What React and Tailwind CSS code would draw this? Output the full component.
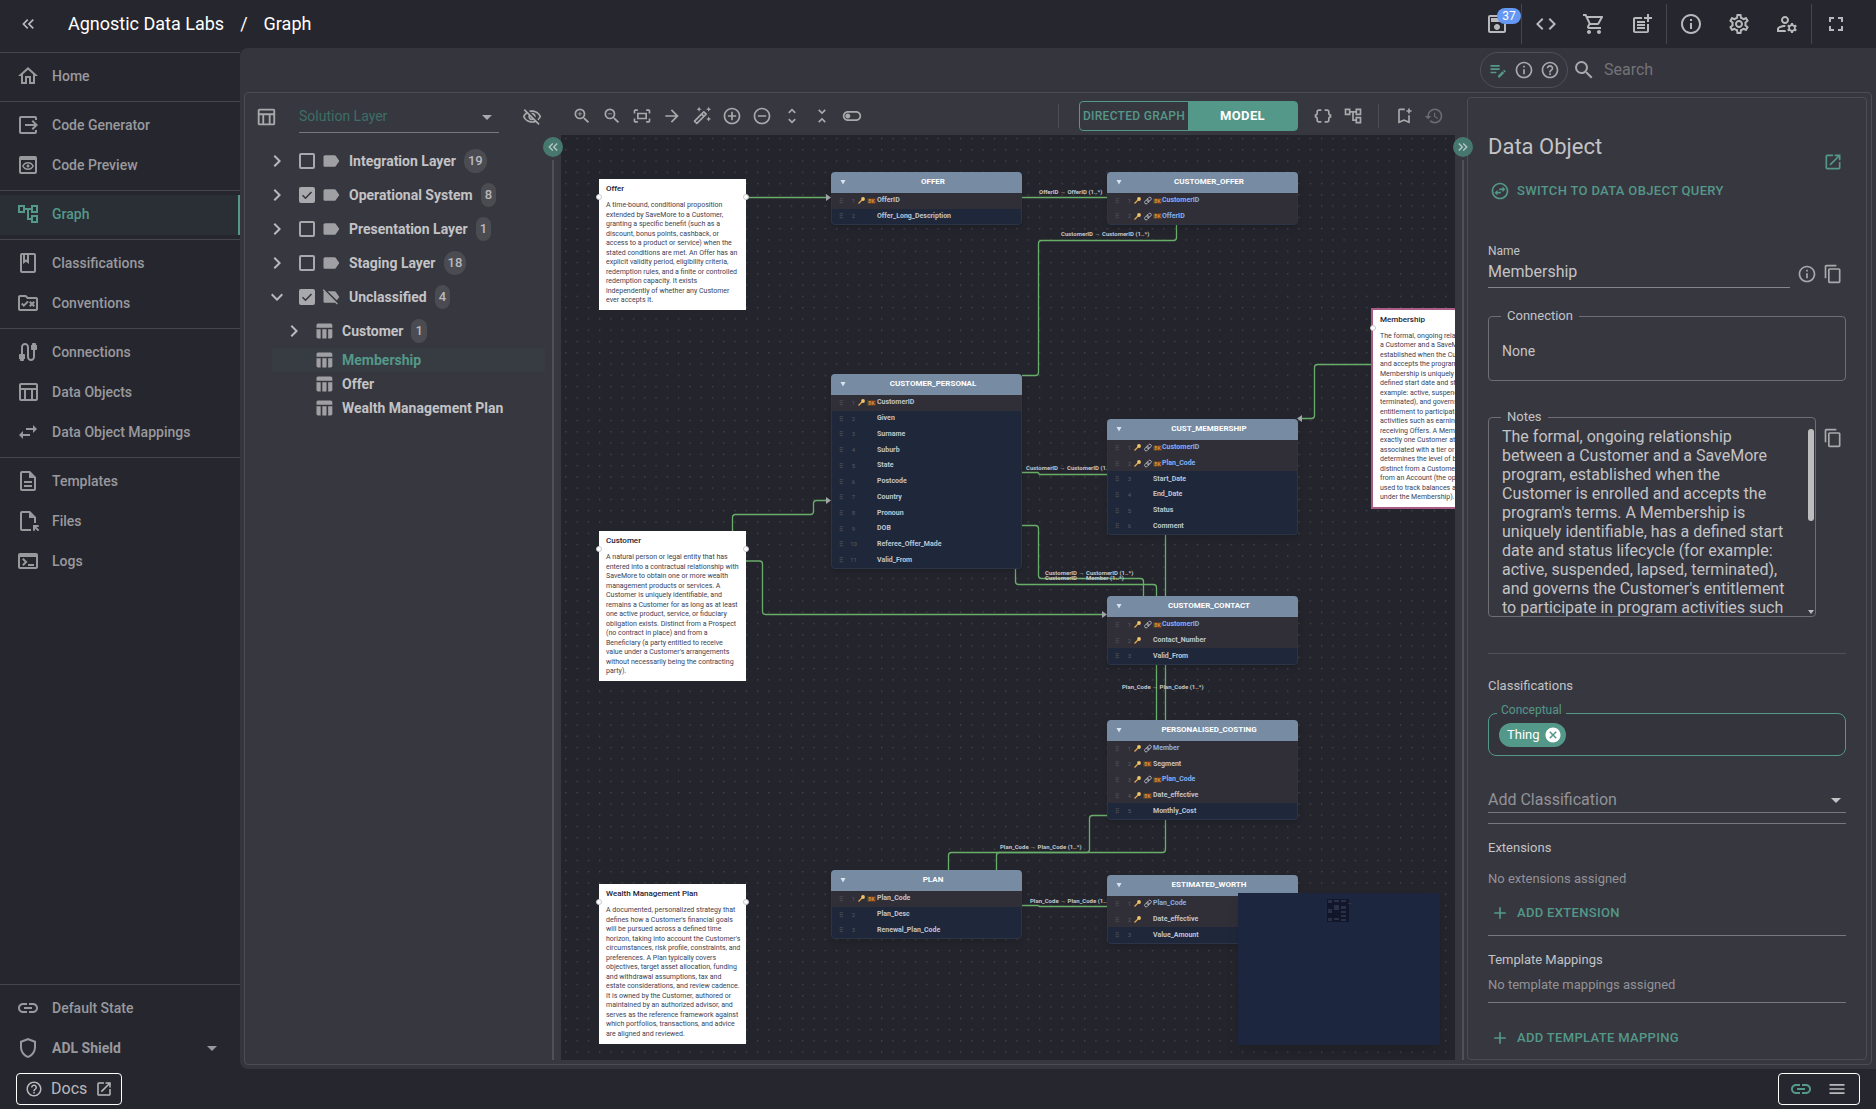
import React from "react"
import {
  MdAdd,
  MdAddCircleOutline,
  MdArrowDropDown,
  MdArrowForward,
  MdCancel,
  MdChevronRight,
  MdCode,
  MdContentCopy,
  MdDataObject,
  MdEditNote,
  MdExpandMore,
  MdFullscreen,
  MdHelpOutline,
  MdHistory,
  MdInfoOutline,
  MdKeyboardDoubleArrowLeft,
  MdKeyboardDoubleArrowRight,
  MdLabel,
  MdLabelOff,
  MdLink,
  MdMenu,
  MdOpenInNew,
  MdOutlineAccountTree,
  MdOutlineAutoFixHigh,
  MdOutlineBookmarkAdd,
  MdOutlineCable,
  MdOutlineClass,
  MdOutlineDescription,
  MdOutlineFileOpen,
  MdOutlineFitScreen,
  MdOutlineHome,
  MdOutlineManageAccounts,
  MdOutlineOutput,
  MdOutlinePreview,
  MdOutlineRuleFolder,
  MdOutlineSave,
  MdOutlineSettings,
  MdOutlineShield,
  MdOutlineShoppingCart,
  MdOutlineSwapHorizontalCircle,
  MdOutlineTableChart,
  MdOutlineTerminal,
  MdOutlineToggleOff,
  MdOutlineVisibilityOff,
  MdPostAdd,
  MdRemoveCircleOutline,
  MdSearch,
  MdSwapHoriz,
  MdTableChart,
  MdUnfoldLess,
  MdUnfoldMore,
  MdZoomIn,
  MdZoomOut,
} from "react-icons/md"

const navGroups = [
  [{ label: "Home", icon: MdOutlineHome }],
  [
    { label: "Code Generator", icon: MdOutlineOutput },
    { label: "Code Preview", icon: MdOutlinePreview },
  ],
  [{ label: "Graph", icon: MdOutlineAccountTree, active: true }],
  [
    { label: "Classifications", icon: MdOutlineClass },
    { label: "Conventions", icon: MdOutlineRuleFolder },
  ],
  [
    { label: "Connections", icon: MdOutlineCable },
    { label: "Data Objects", icon: MdOutlineTableChart },
    { label: "Data Object Mappings", icon: MdSwapHoriz },
  ],
  [
    { label: "Templates", icon: MdOutlineDescription },
    { label: "Files", icon: MdOutlineFileOpen },
    { label: "Logs", icon: MdOutlineTerminal },
  ],
]

const layers = [
  { label: "Integration Layer", count: 19 },
  { label: "Operational System", count: 8, checked: true },
  { label: "Presentation Layer", count: 1 },
  { label: "Staging Layer", count: 18 },
  { label: "Unclassified", count: 4, checked: true, open: true },
]

const notes = [
  {
    title: "Offer",
    x: 38,
    y: 44,
    h: 131,
    lines: [
      "A time-bound, conditional proposition",
      "extended by SaveMore to a Customer,",
      "granting a specific benefit (such as a",
      "discount, bonus points, cashback, or",
      "access to a product or service) when the",
      "stated conditions are met. An Offer has an",
      "explicit validity period, eligibility criteria,",
      "redemption rules, and a finite or controlled",
      "redemption capacity. It exists",
      "independently of whether any Customer",
      "ever accepts it.",
    ],
  },
  {
    title: "Customer",
    x: 38,
    y: 396,
    h: 150,
    lines: [
      "A natural person or legal entity that has",
      "entered into a contractual relationship with",
      "SaveMore to obtain one or more wealth",
      "management products or services. A",
      "Customer is uniquely identifiable, and",
      "remains a Customer for as long as at least",
      "one active product, service, or fiduciary",
      "obligation exists. Distinct from a Prospect",
      "(no contract in place) and from a",
      "Beneficiary (a party entitled to receive",
      "value under a Customer's arrangements",
      "without necessarily being the contracting",
      "party).",
    ],
  },
  {
    title: "Wealth Management Plan",
    x: 38,
    y: 749,
    h: 160,
    lines: [
      "A documented, personalized strategy that",
      "defines how a Customer's financial goals",
      "will be pursued across a defined time",
      "horizon, taking into account the Customer's",
      "circumstances, risk profile, constraints, and",
      "preferences. A Plan typically covers",
      "objectives, target asset allocation, funding",
      "and withdrawal assumptions, tax and",
      "estate considerations, and review cadence.",
      "It is owned by the Customer, authored or",
      "maintained by an authorized advisor, and",
      "serves as the reference framework against",
      "which portfolios, transactions, and advice",
      "are aligned and reviewed.",
    ],
  },
  {
    title: "Membership",
    x: 812,
    y: 175,
    h: 197,
    selected: true,
    lines: [
      "The formal, ongoing relationship between",
      "a Customer and a SaveMore program,",
      "established when the Customer is enrolled",
      "and accepts the program's terms. A",
      "Membership is uniquely identifiable, has a",
      "defined start date and status lifecycle (for",
      "example: active, suspended, lapsed,",
      "terminated), and governs the Customer's",
      "entitlement to participate in program",
      "activities such as earning points and",
      "receiving Offers. A Membership belongs to",
      "exactly one Customer at a time, may be",
      "associated with a tier or status that",
      "determines the level of benefits, and is",
      "distinct from a Customer (the party) and",
      "from an Account (the operational record",
      "used to track balances and activity",
      "under the Membership).",
    ],
  },
]

// field format: [name, flags] where K = key, L = foreign key link, B = business key
const entities = [
  { title: "OFFER", x: 270, y: 37, h: 53, fields: [["OfferID", "KB"], ["Offer_Long_Description", ""]] },
  { title: "CUSTOMER_OFFER", x: 546, y: 37, h: 53, fields: [["CustomerID", "KLB"], ["OfferID", "KLB"]] },
  {
    title: "CUSTOMER_PERSONAL",
    x: 270,
    y: 239,
    h: 195,
    fields: [
      ["CustomerID", "KB"],
      ["Given", ""],
      ["Surname", ""],
      ["Suburb", ""],
      ["State", ""],
      ["Postcode", ""],
      ["Country", ""],
      ["Pronoun", ""],
      ["DOB", ""],
      ["Referee_Offer_Made", ""],
      ["Valid_From", ""],
    ],
  },
  {
    title: "CUST_MEMBERSHIP",
    x: 546,
    y: 284,
    h: 116,
    fields: [
      ["CustomerID", "KLB"],
      ["Plan_Code", "KLB"],
      ["Start_Date", ""],
      ["End_Date", ""],
      ["Status", ""],
      ["Comment", ""],
    ],
  },
  {
    title: "CUSTOMER_CONTACT",
    x: 546,
    y: 461,
    h: 69,
    fields: [["CustomerID", "KLB"], ["Contact_Number", "K"], ["Valid_From", ""]],
  },
  {
    title: "PERSONALISED_COSTING",
    x: 546,
    y: 585,
    h: 100,
    fields: [
      ["Member", "KL"],
      ["Segment", "KB"],
      ["Plan_Code", "KLB"],
      ["Date_effective", "KB"],
      ["Monthly_Cost", ""],
    ],
  },
  { title: "PLAN", x: 270, y: 735, h: 69, fields: [["Plan_Code", "KB"], ["Plan_Desc", ""], ["Renewal_Plan_Code", ""]] },
  {
    title: "ESTIMATED_WORTH",
    x: 546,
    y: 740,
    h: 69,
    fields: [["Plan_Code", "KL"], ["Date_effective", "K"], ["Value_Amount", ""]],
  },
]

const edges = [
  "M185 62.5H266",
  "M461 62.5H546",
  "M615.5 90V102.500Q615.500 105.500 612.500 105.500H480.500Q477.500 105.500 477.500 108.500V237.500Q477.500 240.500 474.500 240.500H461",
  "M171.500 396V382.500Q171.500 379.500 174.500 379.500H249.500Q252.500 379.500 252.500 376.500V368.500Q252.500 365.500 255.500 365.500H266",
  "M185 426H198.500Q201.500 426 201.500 429V476.500Q201.500 479.500 204.500 479.500H542",
  "M461 337.500H477L478.500 339.500H546",
  "M810 229.500H756.500Q753.500 229.500 753.500 232.500V280.500Q753.500 283.500 750.500 283.500H740",
  "M461 390.500H474.500Q477.500 390.500 477.500 393.500V440.500Q477.500 443.500 480.500 443.500H579.500Q582.500 443.500 582.500 446.500V461",
  "M454.500 434V446.500Q454.500 449.500 457.500 449.500H592.500Q595.500 449.500 595.500 452.500V585",
  "M604.500 400V714.500Q604.500 717.500 601.500 717.500H390.500Q387.500 717.500 387.500 720.500V735",
  "M546 680.500H531.500Q528.500 680.500 528.500 683.500V714.500Q528.500 717.500 525.500 717.500H438.500Q435.500 717.500 435.500 720.500V735",
  "M461 770.500H477L478.500 771.500H546",
]

const edgeLabels = [
  { text: "OfferID → OfferID (1..*)", x: 478, y: 59 },
  { text: "CustomerID → CustomerID (1..*)", x: 500, y: 101 },
  { text: "CustomerID → CustomerID (1..*)", x: 465, y: 335 },
  { text: "CustomerID → CustomerID (1..*)", x: 484, y: 440 },
  { text: "CustomerID → Member (1..*)", x: 484, y: 445 },
  { text: "Plan_Code → Plan_Code (1..*)", x: 561, y: 554 },
  { text: "Plan_Code → Plan_Code (1..*)", x: 439, y: 714 },
  { text: "Plan_Code → Plan_Code (1..*)", x: 469, y: 768 },
]

const arrows = [
  "M265 59L270 62.500L265 66Z",
  "M265 362L270 365.500L265 369Z",
  "M541 476L546 479.500L541 483Z",
  "M741 280L736 283.500L741 287Z",
]

function IconButton({ label, icon: Icon, className = "size-[30px]", iconClass = "size-5" }) {
  return (
    <button aria-label={label} className={`flex shrink-0 items-center justify-center ${className}`}>
      <Icon className={iconClass} />
    </button>
  )
}

function Header() {
  return (
    <header className="flex h-12 shrink-0 items-center pr-4 text-[#b9b9bd]">
      <IconButton label="Collapse menu" icon={MdKeyboardDoubleArrowLeft} className="ml-1 h-12 w-12" />
      <h1 className="ml-4 flex gap-4 text-lg text-white">
        <span>Agnostic Data Labs</span>
        <span>/</span>
        <span>Graph</span>
      </h1>
      <div className="ml-auto flex items-center">
        <div className="relative">
          <IconButton label="Save" icon={MdOutlineSave} className="size-12" iconClass="size-6" />
          <span className="absolute top-2 right-0 flex h-4 w-6 items-center justify-center rounded-full bg-[#6597f5] text-xs text-white">
            37
          </span>
        </div>
        <div className="h-10 w-px bg-[#45454c]" />
        <IconButton label="Code" icon={MdCode} className="size-12" iconClass="size-6" />
        <IconButton label="Cart" icon={MdOutlineShoppingCart} className="size-12" iconClass="size-6" />
        <IconButton label="New post" icon={MdPostAdd} className="size-12" iconClass="size-6" />
        <div className="h-10 w-px bg-[#45454c]" />
        <IconButton label="Info" icon={MdInfoOutline} className="size-12" iconClass="size-6" />
        <IconButton label="Settings" icon={MdOutlineSettings} className="size-12" iconClass="size-6" />
        <IconButton label="Account" icon={MdOutlineManageAccounts} className="size-12" iconClass="size-6" />
        <div className="h-10 w-px bg-[#45454c]" />
        <IconButton label="Fullscreen" icon={MdFullscreen} className="size-12" iconClass="size-6" />
      </div>
    </header>
  )
}

function NavItem({ label, icon: Icon, active }) {
  return (
    <a
      href="#"
      className={`flex h-10 items-center gap-3 pb-0.5 pl-4 text-sm font-medium ${
        active ? "border-r-2 border-[#549889] bg-[#292f34] text-[#549889]" : "text-[#99999d]"
      }`}
    >
      <Icon className="size-6" />
      {label}
    </a>
  )
}

function Sidebar() {
  return (
    <aside className="flex w-60 shrink-0 flex-col pt-1">
      {navGroups.map((group, i) => (
        <nav key={i} className="border-t border-[#46464c] py-1">
          {group.map((item) => (
            <NavItem key={item.label} {...item} />
          ))}
        </nav>
      ))}
      <div className="mt-auto border-t border-[#46464c] pt-1">
        <NavItem label="Default State" icon={MdLink} />
        <button className="flex h-10 w-full items-center gap-3 px-4 pb-0.5 text-sm font-bold text-[#99999d]">
          <MdOutlineShield className="size-6" />
          ADL Shield
          <MdArrowDropDown className="ml-auto size-6" />
        </button>
      </div>
    </aside>
  )
}

function CountBadge({ children }) {
  return (
    <span className="ml-2 flex h-6 items-center rounded-xl bg-[#4b4c51] px-1 text-[13px] font-medium text-[#b9b9bd]">
      {children}
    </span>
  )
}

function LayerRow({ label, count, checked, open }) {
  const Tag = open ? MdLabelOff : MdLabel
  const Chevron = open ? MdExpandMore : MdChevronRight
  return (
    <li className="flex h-[34px] items-center pl-5">
      <Chevron className="size-6 text-[#b9b9bd]" />
      <label className="ml-2.5 flex items-center">
        <span className="relative flex size-4">
          <input
            type="checkbox"
            defaultChecked={checked}
            className="peer size-4 appearance-none rounded-xs border-2 border-[#a9a9ad] checked:bg-[#a9a9ad]"
          />
          <svg viewBox="0 0 16 16" className="absolute inset-0 hidden size-4 peer-checked:block">
            <path d="M3.500 8.200L6.500 11.200L12.500 5" fill="none" stroke="#36363e" strokeWidth="1.600" />
          </svg>
        </span>
        <Tag className="ml-1.5 size-5 text-[#a0a0a4]" />
        <span className="ml-2">{label}</span>
      </label>
      <CountBadge>{count}</CountBadge>
    </li>
  )
}

function LayerTree() {
  return (
    <section className="flex w-[300px] shrink-0 flex-col">
      <div className="flex h-12 items-center pl-2.5 text-[#a9a9ad]">
        <MdOutlineTableChart className="size-[22px] shrink-0" />
        <div className="relative ml-[22px] h-8 w-[200px] shrink-0 border-b border-[#77777c]">
          <select
            aria-label="Solution Layer"
            className="h-[30px] w-full appearance-none text-sm text-[#3b6f67]"
          >
            <option>Solution Layer</option>
          </select>
          <MdArrowDropDown className="pointer-events-none absolute top-1 right-0 size-6" />
        </div>
        <IconButton label="Hide layers" icon={MdOutlineVisibilityOff} className="ml-[18px] size-[30px]" />
      </div>
      <ul className="mt-[3px] text-sm font-bold text-[#c3c3c6]">
        {layers.map((layer) => (
          <LayerRow key={layer.label} {...layer} />
        ))}
        <li className="flex h-[34px] items-center pl-[37px]">
          <MdChevronRight className="size-6 text-[#b9b9bd]" />
          <MdTableChart className="ml-2 size-5 text-[#a0a0a4]" />
          <span className="ml-2">Customer</span>
          <CountBadge>1</CountBadge>
        </li>
        <li className="ml-[27px] flex h-6 items-center gap-2 bg-[#373c42] pl-[42px] text-[#549889]">
          <MdTableChart className="size-5 text-[#a0a0a4]" />
          Membership
        </li>
        <li className="ml-[27px] flex h-6 items-center gap-2 pl-[42px]">
          <MdTableChart className="size-5 text-[#a0a0a4]" />
          Offer
        </li>
        <li className="ml-[27px] flex h-6 items-center gap-2 pl-[42px]">
          <MdTableChart className="size-5 text-[#a0a0a4]" />
          Wealth Management Plan
        </li>
      </ul>
    </section>
  )
}

function Splitter({ label, icon: Icon, className, lineClass, buttonClass }) {
  return (
    <div className={`relative z-10 shrink-0 pb-1 ${className}`}>
      <div className={`absolute top-[67px] bottom-1 w-0.5 bg-[#505158] ${lineClass}`} />
      <button
        aria-label={label}
        className={`absolute top-11 flex size-5 items-center justify-center rounded-full bg-[#46786f] text-[#b9c9c5] ${buttonClass}`}
      >
        <Icon className="size-4" />
      </button>
    </div>
  )
}

function GraphToolbar() {
  return (
    <div className="flex h-[42px] shrink-0 items-center px-1.5 pt-1 text-[#a9a9ad]">
      <IconButton label="Zoom in" icon={MdZoomIn} />
      <IconButton label="Zoom out" icon={MdZoomOut} />
      <IconButton label="Fit to screen" icon={MdOutlineFitScreen} />
      <IconButton label="Direction" icon={MdArrowForward} />
      <IconButton label="Auto layout" icon={MdOutlineAutoFixHigh} />
      <IconButton label="Add" icon={MdAddCircleOutline} />
      <IconButton label="Remove" icon={MdRemoveCircleOutline} />
      <IconButton label="Expand all" icon={MdUnfoldMore} />
      <IconButton label="Collapse all" icon={MdUnfoldLess} />
      <IconButton label="Toggle" icon={MdOutlineToggleOff} />
      <div className="ml-auto h-6 w-px bg-[#4c4d53]" />
      <div className="ml-5 flex h-[30px] w-[219px] rounded-sm border border-[#549889]">
        <button className="w-[108px] text-xs font-medium tracking-wide whitespace-nowrap text-[#549889]">
          DIRECTED GRAPH
        </button>
        <button className="flex-1 bg-[#549889] text-[13px] font-bold tracking-wide text-white">MODEL</button>
      </div>
      <IconButton label="View JSON" icon={MdDataObject} className="ml-2.5 size-[30px]" />
      <IconButton label="View tree" icon={MdOutlineAccountTree} />
      <div className="mx-2.5 h-6 w-px bg-[#4c4d53]" />
      <IconButton label="Add bookmark" icon={MdOutlineBookmarkAdd} />
      <IconButton label="History" icon={MdHistory} className="size-[30px] text-[#6a6a70]" />
    </div>
  )
}

function NoteNode({ title, x, y, h, lines, selected }) {
  return (
    <article
      className={`absolute flex w-[147px] flex-col bg-white px-[7px] pb-[5px] text-[#3c4254] ${
        selected ? "ring-2 ring-[#a85c86]" : ""
      }`}
      style={{ left: x, top: y, height: h }}
    >
      <h3 className="h-[22px] pt-[5px] text-[8px] leading-[10px] font-medium text-[#1c2236]">{title}</h3>
      <p className="flex flex-1 flex-col justify-between text-[7px] leading-[9px] whitespace-nowrap">
        {lines.map((line) => (
          <span key={line}>{line}</span>
        ))}
      </p>
      <i className="absolute top-[15px] -left-[3px] size-[6px] rounded-full border border-[#c9c9cf] bg-white" />
      <i className="absolute top-[15px] -right-[3px] size-[6px] rounded-full border border-[#c9c9cf] bg-white" />
    </article>
  )
}

function KeyMark() {
  return (
    <svg viewBox="0 0 10 9" className="w-[10px]">
      <circle cx="6" cy="3" r="1.900" fill="#efc56a" />
      <path d="M5 4L1.500 7.500" stroke="#e8a94a" strokeWidth="1.300" />
    </svg>
  )
}

function LinkMark() {
  return (
    <svg viewBox="0 0 10 9" className="w-[10px]">
      <g transform="rotate(-45 5 4.500)" fill="none" stroke="#b7bac4" strokeWidth="0.900">
        <rect x="0.800" y="3" width="5" height="3" rx="1.500" />
        <rect x="4" y="3" width="5" height="3" rx="1.500" />
      </g>
    </svg>
  )
}

function EntityNode({ title, x, y, h, fields }) {
  return (
    <article
      className="absolute flex w-[191px] flex-col overflow-hidden rounded-sm bg-[#1f273a] shadow-md"
      style={{ left: x, top: y, height: h }}
    >
      <h3 className="flex h-[21px] shrink-0 items-center bg-[#778ba3] pr-0.5 pb-px text-[8px] font-bold text-white">
        <svg viewBox="0 0 6 6" className="ml-[9px] size-[6px]">
          <path d="M0.500 1H5.500L3 5.500Z" fill="#d9e4ee" />
        </svg>
        <span className="flex-1 text-center">{title}</span>
      </h3>
      <ol className="flex flex-1 flex-col rounded-b-sm border border-t-0 border-[#2c3547]">
        {fields.map(([name, flags], i) => (
          <li
            key={name}
            className={`flex flex-1 items-center text-[7px] leading-none font-bold ${
              flags ? "bg-[#302f38]" : ""
            } ${flags.includes("L") ? "text-[#84aff0]" : "text-[#bfc4cf]"}`}
          >
            <span className="w-[18px] text-center text-[6px] text-[#474d5b]">⠿</span>
            <span className="w-[7px] text-center text-[6px] font-normal text-[#555b69]">{i + 1}</span>
            <span className="flex min-w-5 items-center">
              {flags.includes("K") && <KeyMark />}
              {flags.includes("L") && <LinkMark />}
              {flags.includes("B") && (
                <span className="w-[9px] rounded-[1px] bg-[#553c28] text-center text-[5px] leading-[6px] font-bold text-[#e08c36]">
                  BK
                </span>
              )}
            </span>
            <span>{name}</span>
          </li>
        ))}
      </ol>
    </article>
  )
}

function Minimap() {
  return (
    <div className="absolute right-[15px] bottom-[15px] h-[152px] w-[202px] bg-[#1c273f] shadow-lg">
      <svg viewBox="0 0 202 152" className="size-full">
        <rect x="89" y="6" width="22" height="23" fill="#12162b" />
        <g fill="#2a3048">
          <rect x="90" y="7" width="4" height="3" />
          <rect x="90" y="16" width="4" height="4" />
          <rect x="90" y="25" width="4" height="3" />
          <rect x="96" y="7" width="5" height="2" />
          <rect x="96" y="12" width="5" height="5" />
          <rect x="103" y="7" width="5" height="2" />
          <rect x="103" y="13" width="5" height="3" />
          <rect x="103" y="18" width="5" height="2" />
          <rect x="103" y="22" width="5" height="2" />
          <rect x="103" y="26" width="5" height="2" />
          <rect x="96" y="25" width="5" height="2" />
          <rect x="110" y="10" width="4" height="1" />
        </g>
      </svg>
    </div>
  )
}

function GraphCanvas() {
  return (
    <div className="relative flex-1 overflow-hidden bg-[#24252c]">
      <svg className="absolute inset-0 size-full">
        <defs>
          <pattern id="dots" x="4.200" y="2.800" width="11.280" height="11.280" patternUnits="userSpaceOnUse">
            <circle cx="0.700" cy="0.700" r="0.600" fill="#55564f" />
          </pattern>
        </defs>
        <rect width="100%" height="100%" fill="url(#dots)" />
        {edges.map((d) => (
          <path key={d} d={d} fill="none" stroke="#69ad6a" strokeWidth="1.300" />
        ))}
        {arrows.map((d) => (
          <path key={d} d={d} fill="#a3a6a8" />
        ))}
        {edgeLabels.map(({ text, x, y }, i) => (
          <text key={i} x={x} y={y} fill="#c3c5cc" className="text-[6px] font-bold">
            {text}
          </text>
        ))}
      </svg>
      {notes.map((note) => (
        <NoteNode key={note.title} {...note} />
      ))}
      {entities.map((entity) => (
        <EntityNode key={entity.title} {...entity} />
      ))}
      <Minimap />
    </div>
  )
}

function TextButton({ icon: Icon, children, className }) {
  return (
    <button
      className={`flex shrink-0 items-center gap-[7px] pl-0.5 text-[13px] font-medium tracking-wide text-[#549889] ${className}`}
    >
      <Icon className="size-5" />
      {children}
    </button>
  )
}

const notesText =
  "The formal, ongoing relationship between a Customer and a SaveMore program, established when the Customer is enrolled and accepts the program's terms. A Membership is uniquely identifiable, has a defined start date and status lifecycle (for example: active, suspended, lapsed, terminated), and governs the Customer's entitlement to participate in program activities such"

function DetailsPanel() {
  return (
    <section className="mt-1 mr-1 mb-1 flex w-[400px] shrink-0 flex-col overflow-hidden rounded-sm border border-[#4c4d53] px-5 pt-[34px] text-[#c3c3c6]">
      <div className="flex h-10 shrink-0 justify-between">
        <h2 className="pt-px text-[22px] leading-7">Data Object</h2>
        <IconButton label="Open" icon={MdOpenInNew} className="mr-[3px] size-5 self-end text-[#549889]" />
      </div>
      <TextButton icon={MdOutlineSwapHorizontalCircle} className="h-[38px]">
        SWITCH TO DATA OBJECT QUERY
      </TextButton>

      <label htmlFor="name" className="mt-[33px] text-xs leading-4">
        Name
      </label>
      <div className="flex shrink-0 items-center text-[#a9a9ad]">
        <input
          id="name"
          defaultValue="Membership"
          className="h-[29px] w-0 flex-1 border-b border-[#85858a] pb-1 text-base text-[#c3c3c6]"
        />
        <IconButton label="About the name" icon={MdInfoOutline} className="ml-[7px] size-5" />
        <IconButton label="Copy name" icon={MdContentCopy} className="mr-[3px] ml-1.5 size-5" />
      </div>

      <fieldset className="mt-5 h-[73px] shrink-0 rounded-sm border border-[#6d6d73] px-[13px]">
        <legend className="-ml-px px-1.5 text-[13px] leading-4">Connection</legend>
        <input aria-label="Connection" defaultValue="None" className="mt-[17px] w-full text-sm" />
      </fieldset>

      <div className="mt-7 flex shrink-0">
        <fieldset className="relative h-[208px] w-0 flex-1 rounded-sm border border-[#6d6d73] pr-6 pl-[13px]">
          <legend className="-ml-px px-1.5 text-[13px] leading-4">
            <label htmlFor="notes">Notes</label>
          </legend>
          <textarea
            id="notes"
            defaultValue={notesText}
            className="mt-[2px] h-[190px] w-full resize-none overflow-hidden text-base leading-[19px]"
          />
          <div className="absolute top-1 right-[1px] h-[92px] w-1.5 rounded-full bg-[#bdbdc0]" />
          <svg viewBox="0 0 6 4" className="absolute right-[1px] bottom-0.5 h-1 w-1.5">
            <path d="M0 0H6L3 4Z" fill="#bdbdc0" />
          </svg>
        </fieldset>
        <IconButton label="Copy notes" icon={MdContentCopy} className="mt-[19px] mr-[3px] ml-[7px] size-5 text-[#a9a9ad]" />
      </div>

      <hr className="mt-9 border-[#505158]" />
      <h3 className="mt-6 text-[13px] leading-4">Classifications</h3>
      <fieldset className="mt-2 h-[54px] shrink-0 rounded-lg border border-[#549889] bg-[#33343c] px-2.5">
        <legend className="-ml-0.5 px-1 pb-1.5 text-xs leading-4 text-[#549889]">Conceptual</legend>
        <span className="-mt-px flex h-6 w-fit items-center gap-1 rounded-full bg-[#549889] pr-1 pl-2 text-[13px] text-white">
          Thing
          <button aria-label="Remove Thing">
            <MdCancel className="size-[18px]" />
          </button>
        </span>
      </fieldset>

      <div className="relative mt-8 h-[25px] shrink-0 border-b border-[#77777c]">
        <select aria-label="Add Classification" className="w-full appearance-none text-base text-[#929297]">
          <option>Add Classification</option>
        </select>
        <MdArrowDropDown className="pointer-events-none absolute top-0 -right-0.5 size-6" />
      </div>
      <hr className="mt-2.5 border-[#77777c]" />
      <h3 className="mt-4 text-[13px] leading-4">Extensions</h3>
      <p className="mt-[15px] text-[13px] leading-4 text-[#929297]">No extensions assigned</p>
      <TextButton icon={MdAdd} className="mt-2 h-9">
        ADD EXTENSION
      </TextButton>
      <hr className="mt-1 border-[#77777c]" />
      <h3 className="mt-4 text-[13px] leading-4">Template Mappings</h3>
      <p className="mt-[9px] text-[13px] leading-4 text-[#929297]">No template mappings assigned</p>
      <hr className="mt-[9px] border-[#77777c]" />
      <TextButton icon={MdAdd} className="mt-[17px] h-9">
        ADD TEMPLATE MAPPING
      </TextButton>
    </section>
  )
}

function SearchRow() {
  return (
    <div className="flex h-11 shrink-0 items-center text-[#a9a9ad]">
      <div className="ml-auto flex h-9 items-center gap-1.5 rounded-full border border-[#505158] px-[7px]">
        <IconButton label="Edit" icon={MdEditNote} className="size-5 text-[#549889]" />
        <IconButton label="Info" icon={MdInfoOutline} className="size-5" />
        <IconButton label="Help" icon={MdHelpOutline} className="size-5" />
      </div>
      <label className="ml-1 flex w-[300px] items-center gap-2">
        <MdSearch className="size-6 shrink-0" />
        <input
          type="text"
          aria-label="Search"
          placeholder="Search"
          className="w-0 flex-1 text-base placeholder:text-[#737378]"
        />
      </label>
    </div>
  )
}

function Footer() {
  return (
    <footer className="flex h-10 shrink-0 items-center justify-between px-4 pb-px text-[#b9b9bd]">
      <a href="#" className="flex h-8 items-center gap-2 rounded-sm border border-white px-2 text-base">
        <MdHelpOutline className="size-[18px]" />
        Docs
        <MdOpenInNew className="size-[18px]" />
      </a>
      <div className="flex h-8 items-center gap-3 rounded-sm border border-white px-2.5">
        <IconButton label="Link" icon={MdLink} className="size-6 text-[#549889]" iconClass="size-6" />
        <IconButton label="List" icon={MdMenu} className="size-6" />
      </div>
    </footer>
  )
}

function App() {
  return (
    <div className="flex h-screen flex-col bg-[#26262e] font-['Roboto',sans-serif]">
      <Header />
      <div className="flex min-h-0 flex-1">
        <Sidebar />
        <main className="flex min-w-0 flex-1 flex-col rounded-l-lg bg-[#35353d] px-1 pb-1">
          <SearchRow />
          <div className="flex min-h-0 flex-1 rounded-sm border border-[#4c4d53] bg-[#37373f]">
            <LayerTree />
            <Splitter
              label="Collapse tree"
              icon={MdKeyboardDoubleArrowLeft}
              className="w-4"
              lineClass="left-[7px]"
              buttonClass="-left-0.5"
            />
            <div className="flex min-w-0 flex-1 flex-col pb-1">
              <GraphToolbar />
              <GraphCanvas />
            </div>
            <Splitter
              label="Collapse details"
              icon={MdKeyboardDoubleArrowRight}
              className="w-3"
              lineClass="left-[7px]"
              buttonClass="-left-0.5"
            />
            <DetailsPanel />
          </div>
        </main>
      </div>
      <Footer />
    </div>
  )
}

export default App
